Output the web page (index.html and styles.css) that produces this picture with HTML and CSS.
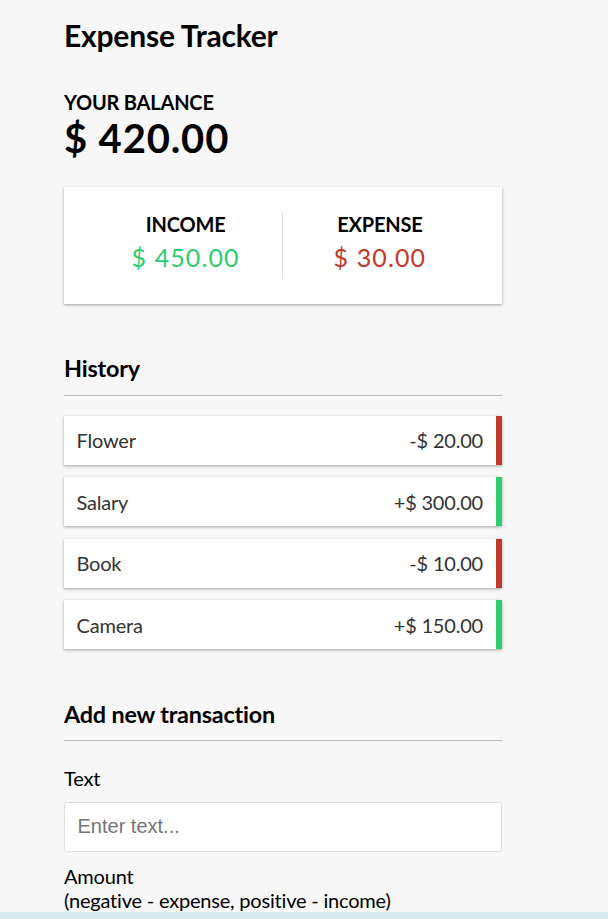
FILE: index.html
```html
<!DOCTYPE html>
<html lang="en">
<head>
<meta charset="utf-8">
<title>Expense Tracker</title>
<link rel="stylesheet" href="styles.css">
</head>
<body>
<div class="app">
  <h2 class="title">Expense Tracker</h2>
  <div class="container">
    <h4>Your Balance</h4>
    <h1 class="balance">$ 420.00</h1>
    <div class="inc-exp-container">
      <div class="inc-exp-col">
        <h4>Income</h4>
        <p class="money plus">$ 450.00</p>
      </div>
      <div class="inc-exp-col">
        <h4>Expense</h4>
        <p class="money minus">$ 30.00</p>
      </div>
    </div>
    <h3 class="section-title">History</h3>
    <ul class="list">
      <li class="item minus"><span>Flower</span><span>-$ 20.00</span></li>
      <li class="item plus"><span>Salary</span><span>+$ 300.00</span></li>
      <li class="item minus"><span>Book</span><span>-$ 10.00</span></li>
      <li class="item plus"><span>Camera</span><span>+$ 150.00</span></li>
    </ul>
    <h3 class="section-title">Add new transaction</h3>
    <form class="form">
      <div class="form-control">
        <label class="label" for="text">Text</label>
        <input class="field" type="text" id="text" placeholder="Enter text...">
      </div>
      <div class="form-control">
        <label class="label" for="amount">Amount <br>(negative - expense, positive - income)</label>
        <input class="field" type="number" id="amount" placeholder="Enter amount...">
      </div>
      <button class="btn" type="button">Add transaction</button>
    </form>
  </div>
</div>
<div class="bottom-strip"></div>
</body>
</html>
```

FILE: styles.css
```css
* {
  box-sizing: border-box;
}

html, body {
  margin: 0;
  padding: 0;
}

body {
  background-color: #f7f7f7;
  font-family: Lato, "Noto Sans", sans-serif;
  font-size: 20px;
  letter-spacing: -0.01em;
  color: #000;
}

.app {
  width: 437.5px;
  margin-left: 64px;
  padding-top: 16.5px;
}

.title {
  font-size: 30px;
  font-weight: 700;
  line-height: 36px;
  margin: 0 0 37.5px;
}

.container {
  width: 437.5px;
}

h4 {
  margin: 0;
  font-size: 20px;
  line-height: 24px;
  font-weight: 700;
  text-transform: uppercase;
}

.balance {
  font-size: 40px;
  line-height: 48px;
  font-weight: 700;
  letter-spacing: 0.85px;
  margin: 0;
}

.inc-exp-container {
  background-color: #fff;
  box-shadow: 0 1.25px 3.75px rgba(0, 0, 0, 0.12), 0 1.25px 2.5px rgba(0, 0, 0, 0.24);
  padding: 25px;
  display: flex;
  justify-content: space-between;
  margin: 25px 0;
}

.inc-exp-col {
  flex: 1;
  text-align: center;
}

.inc-exp-col:first-child {
  border-right: 1px solid #dedede;
}

.money {
  font-size: 25px;
  line-height: 30px;
  letter-spacing: 1.1px;
  margin: 6.25px 0;
}

.money.plus {
  color: #2ecc71;
}

.money.minus {
  color: #c0392b;
}

.section-title {
  font-size: 23.4px;
  line-height: 28px;
  font-weight: 700;
  border-bottom: 1px solid #bbb;
  padding-bottom: 12.5px;
  margin: 50.5px 0 12.5px;
}

.list {
  list-style: none;
  padding: 0;
  margin: 20px 0 49.5px;
}

.item {
  background-color: #fff;
  box-shadow: 0 1.25px 3.75px rgba(0, 0, 0, 0.12), 0 1.25px 2.5px rgba(0, 0, 0, 0.24);
  color: #333;
  display: flex;
  justify-content: space-between;
  padding: 12.5px;
  margin: 12.5px 0;
  line-height: 24px;
}

.item.plus {
  border-right: 6.25px solid #2ecc71;
}

.item.minus {
  border-right: 6.25px solid #c0392b;
}

.label {
  display: inline-block;
  margin: 12px 0;
  line-height: 24px;
}

.field {
  display: block;
  width: 100%;
  border: 1.25px solid #dedede;
  border-radius: 2.5px;
  font-family: "Liberation Sans", Arial, sans-serif;
  font-size: 20px;
  letter-spacing: 0;
  padding: 12.5px;
  background: #fff;
}

.field::placeholder {
  color: #757575;
}

.btn {
  cursor: pointer;
  background-color: #9c88ff;
  box-shadow: 0 1.25px 3.75px rgba(0, 0, 0, 0.12), 0 1.25px 2.5px rgba(0, 0, 0, 0.24);
  color: #fff;
  border: 0;
  display: block;
  font-family: Lato, "Noto Sans", sans-serif;
  font-size: 20px;
  margin: 12.5px 0 37.5px;
  padding: 12.5px;
  width: 100%;
}

.bottom-strip {
  position: fixed;
  left: 0;
  right: 0;
  bottom: 0;
  height: 7px;
  background-color: #d8eaf0;
}
```
